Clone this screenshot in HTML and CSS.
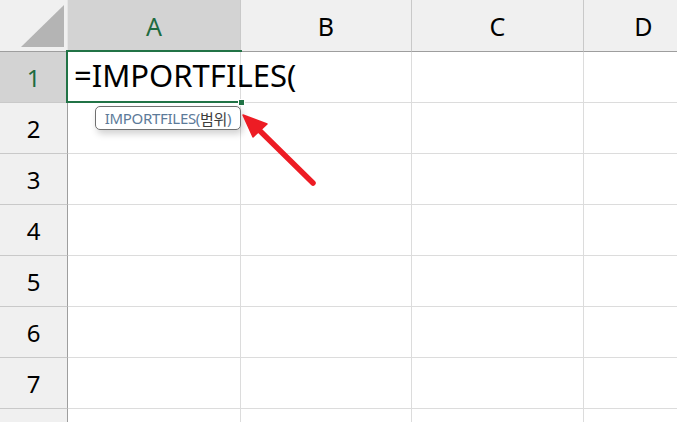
FILE: index.html
```html
<!DOCTYPE html>
<html lang="ko">
<head>
<meta charset="utf-8">
<title>IMPORTFILES</title>
<link rel="stylesheet" href="styles.css">
</head>
<body>
<div class="sheet">
  <div class="grid">
    <div class="corner">
      <svg class="corner-tri" width="67" height="51" viewBox="0 0 67 51"><polygon points="21,47 64,5 64,47" fill="#b4b4b4"/></svg>
    </div>
    <div class="colhead sel">A</div>
    <div class="colhead">B</div>
    <div class="colhead">C</div>
    <div class="colhead last">D</div>

    <div class="rowhead sel">1</div>
    <div class="cell a1"></div>
    <div class="cell"></div><div class="cell"></div><div class="cell last"></div>

    <div class="rowhead">2</div><div class="cell"></div><div class="cell"></div><div class="cell"></div><div class="cell last"></div>
    <div class="rowhead">3</div><div class="cell"></div><div class="cell"></div><div class="cell"></div><div class="cell last"></div>
    <div class="rowhead">4</div><div class="cell"></div><div class="cell"></div><div class="cell"></div><div class="cell last"></div>
    <div class="rowhead">5</div><div class="cell"></div><div class="cell"></div><div class="cell"></div><div class="cell last"></div>
    <div class="rowhead">6</div><div class="cell"></div><div class="cell"></div><div class="cell"></div><div class="cell last"></div>
    <div class="rowhead">7</div><div class="cell"></div><div class="cell"></div><div class="cell"></div><div class="cell last"></div>
    <div class="rowhead"></div><div class="cell"></div><div class="cell"></div><div class="cell"></div><div class="cell last"></div>
  </div>

  <div class="selection"><span class="handle"></span></div>
  <div class="editor"><span class="formula">=IMPORTFILES(</span></div>
  <div class="tooltip"><span class="fn">IMPORTFILES(</span><span class="arg">범위</span><span class="fn">)</span></div>
  <svg class="arrow" width="677" height="422" viewBox="0 0 677 422">
    <line x1="313" y1="183" x2="256" y2="127" stroke="#ed1c24" stroke-width="5.5" stroke-linecap="round"/>
    <polygon points="243,115 253,137 267,124" fill="#ed1c24" stroke="#ed1c24" stroke-width="1.5" stroke-linejoin="round"/>
  </svg>
</div>
</body>
</html>
```
FILE: styles.css
```css
* { box-sizing: border-box; }
html, body { margin: 0; padding: 0; background: #ffffff; }
body { width: 677px; height: 422px; overflow: hidden; font-family: "Noto Sans", "Noto Sans CJK KR", sans-serif; }

.sheet { position: relative; width: 677px; height: 422px; overflow: hidden; }

.grid {
  display: grid;
  grid-template-columns: 68px 173px 171px 172px 120px;
  grid-template-rows: 52px repeat(8, 51px);
  width: 704px;
}

.corner {
  background: #f0f0f0;
  border-right: 1px solid #e6e6e6;
  border-bottom: 1px solid #9e9e9e;
}
.corner-tri { display: block; }

.colhead {
  background: #f0f0f0;
  border-right: 1px solid #c9c9c9;
  border-bottom: 1px solid #9e9e9e;
  display: flex;
  align-items: center;
  justify-content: center;
  font-size: 25px;
  color: #000;
}
.colhead.sel { background: #d3d3d3; color: #1d6b3f; }

.rowhead {
  background: #f0f0f0;
  border-right: 1px solid #9e9e9e;
  border-bottom: 1px solid #c9c9c9;
  display: flex;
  align-items: center;
  justify-content: center;
  font-size: 24px;
  color: #000;
}
.rowhead.sel { background: #d3d3d3; color: #1d6b3f; }

.cell {
  border-right: 1px solid #dcdcdc;
  border-bottom: 1px solid #dcdcdc;
  background: #fff;
}

.selection {
  position: absolute;
  left: 66px;
  top: 50px;
  width: 176px;
  height: 53px;
  border: 2px solid #217346;
  border-right: none;
}
.handle {
  position: absolute;
  right: -3px;
  bottom: -5px;
  width: 7px;
  height: 7px;
  background: #217346;
  border: 1px solid #ffffff;
}

.editor {
  position: absolute;
  left: 68px;
  top: 52px;
  height: 49px;
  padding-left: 6px;
  display: flex;
  align-items: center;
}
.formula {
  font-size: 31px;
  white-space: nowrap;
  color: #000;
  line-height: 1;
  padding-bottom: 2px;
}

.tooltip {
  position: absolute;
  left: 95px;
  top: 106px;
  width: 146px;
  height: 24px;
  border: 1px solid #6f6f6f;
  border-radius: 5px;
  background: #ffffff;
  box-shadow: 2px 4px 7px rgba(0,0,0,0.18);
  display: flex;
  align-items: center;
  justify-content: center;
  font-size: 15px;
  white-space: nowrap;
  letter-spacing: -0.3px;
}
.tooltip .fn { color: #5c7a99; }
.tooltip .arg { color: #3c3c3c; }

.arrow { position: absolute; left: 0; top: 0; pointer-events: none; }
```
